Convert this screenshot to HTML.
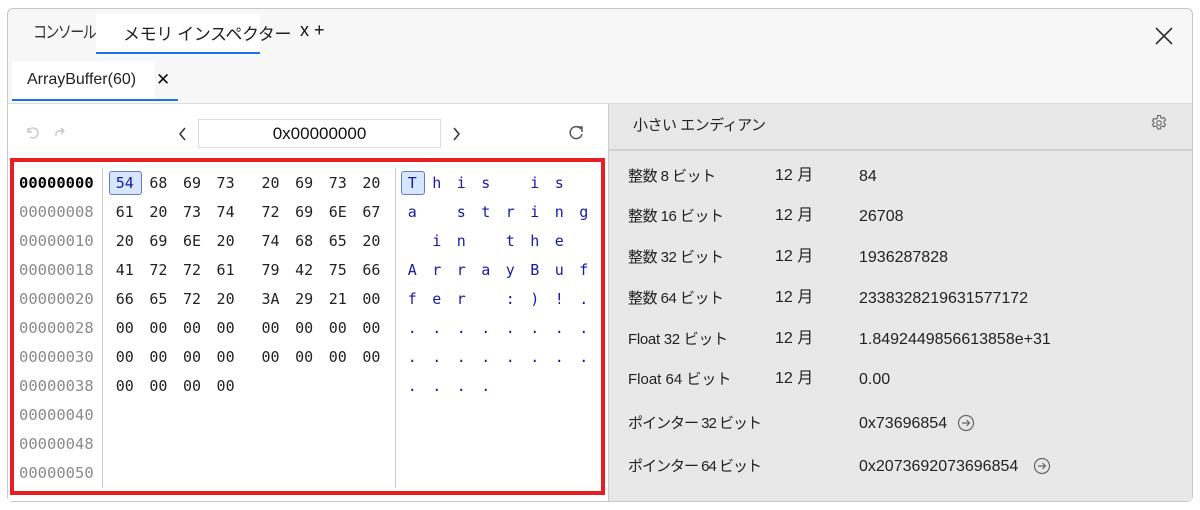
<!DOCTYPE html>
<html><head><meta charset="utf-8"><style>
*{margin:0;padding:0;box-sizing:border-box}
body{width:1200px;height:510px;background:#fff;position:relative;overflow:hidden;font-family:"Liberation Sans","Noto Sans CJK JP",sans-serif;color:#222}
.a{position:absolute}
.win{left:7px;top:8px;width:1186px;height:494px;border:1px solid #c8c8c8;border-radius:6px;background:#f7f7f7;overflow:hidden}
.mono{font-family:"DejaVu Sans Mono","Liberation Mono",monospace}
.row{position:absolute;height:29px;line-height:29px;white-space:nowrap}
.hx{display:flex}
.hx span{display:inline-block;width:33.6px;text-align:center;font-size:15px}
.hx span:nth-child(5){margin-left:11.4px}
.as{display:flex}
.as span{display:inline-block;width:24.5px;text-align:center;font-size:15px;color:#1a1aa6}
.addr{font-size:15.5px;color:#8a8a8a}
.r{font-size:15px;color:#222;height:20px;line-height:20px;white-space:nowrap}
.v{font-size:16px}
</style></head><body>
<div class="a win"></div>
<!-- top tabs -->
<div class="a" style="left:33px;top:20px;font-size:14px;color:#333;letter-spacing:-1.6px;transform:scaleY(1.2);transform-origin:left top">コンソール</div>
<div class="a" style="left:96px;top:14px;width:164px;height:41px;background:#fff"></div>
<div class="a" style="left:96px;top:52px;width:164px;height:2px;background:#1a73e8"></div>
<div class="a" style="left:123px;top:20px;font-size:17px;color:#222;letter-spacing:-0.4px">メモリ インスペクター</div>
<div class="a" style="left:300px;top:20px;font-size:18px;color:#111">x +</div>
<svg class="a" style="left:1154px;top:26px" width="20" height="20"><path d="M2 2L18 18M18 2L2 18" stroke="#333" stroke-width="1.6"/></svg>
<!-- second tab row -->
<div class="a" style="left:12px;top:61px;width:143px;height:40px;background:#fff"></div>
<div class="a" style="left:12px;top:99px;width:166px;height:2px;background:#1a73e8"></div>
<div class="a" style="left:27px;top:71px;font-size:16px;color:#222">ArrayBuffer(60)</div>
<div class="a" style="left:156px;top:70px;font-size:17px;color:#111">✕</div>
<div class="a" style="left:8px;top:103px;width:1184px;height:1px;background:#ddd"></div>
<!-- left panel -->
<div class="a" style="left:8px;top:104px;width:600px;height:397px;background:#fff"></div>
<svg class="a" style="left:24px;top:124px" width="50" height="16"><path d="M4 4v4h4M4 8a5 5 0 1 1 2 5" fill="none" stroke="#c8c8c8" stroke-width="1.4"/><path d="M40 7h-5a3 3 0 0 0 -3 3v2M37 4l3 3-3 3" fill="none" stroke="#c8c8c8" stroke-width="1.4"/></svg>
<svg class="a" style="left:177px;top:126px" width="12" height="16"><path d="M8 2L3 8l5 6" fill="none" stroke="#333" stroke-width="1.5"/></svg>
<div class="a" style="left:198px;top:119px;width:243px;height:29px;border:1px solid #ddd;background:#fff;text-align:center;line-height:27px;font-size:17px;color:#111">0x00000000</div>
<svg class="a" style="left:451px;top:126px" width="12" height="16"><path d="M3 2l5 6-5 6" fill="none" stroke="#333" stroke-width="1.5"/></svg>
<svg class="a" style="left:567px;top:124px" width="18" height="18"><path d="M14 5A6 6 0 1 0 15 10" fill="none" stroke="#555" stroke-width="1.5"/><path d="M10 3h5v5" fill="none" stroke="#555" stroke-width="1.5"/></svg>
<!-- red rect -->
<div class="a" style="left:10px;top:158px;width:595px;height:337px;border:4px solid #e81e25"></div>
<div class="a" style="left:102px;top:168px;width:1px;height:320px;background:#ccc"></div>
<div class="a" style="left:395px;top:168px;width:1px;height:320px;background:#ccc"></div>
<div class="a" style="left:109px;top:171px;width:33px;height:24px;border:1px solid #6a78d0;border-radius:3px;background:#d6e6ff"></div>
<div class="a" style="left:401px;top:171px;width:24px;height:24px;border:1px solid #6a78d0;border-radius:3px;background:#d6e6ff"></div>
<div class="a mono" style="left:19px;top:169px">
<div class="addr" style="height:29px;line-height:29px;color:#000;font-weight:bold">00000000</div>
<div class="addr" style="height:29px;line-height:29px">00000008</div>
<div class="addr" style="height:29px;line-height:29px">00000010</div>
<div class="addr" style="height:29px;line-height:29px">00000018</div>
<div class="addr" style="height:29px;line-height:29px">00000020</div>
<div class="addr" style="height:29px;line-height:29px">00000028</div>
<div class="addr" style="height:29px;line-height:29px">00000030</div>
<div class="addr" style="height:29px;line-height:29px">00000038</div>
<div class="addr" style="height:29px;line-height:29px">00000040</div>
<div class="addr" style="height:29px;line-height:29px">00000048</div>
<div class="addr" style="height:29px;line-height:29px">00000050</div>
</div>
<div class="a mono" style="left:108px;top:169px">
<div class="row hx" style="top:0"><span style="color:#1a1aa6">54</span><span>68</span><span>69</span><span>73</span><span>20</span><span>69</span><span>73</span><span>20</span></div>
<div class="row hx" style="top:29px"><span>61</span><span>20</span><span>73</span><span>74</span><span>72</span><span>69</span><span>6E</span><span>67</span></div>
<div class="row hx" style="top:58px"><span>20</span><span>69</span><span>6E</span><span>20</span><span>74</span><span>68</span><span>65</span><span>20</span></div>
<div class="row hx" style="top:87px"><span>41</span><span>72</span><span>72</span><span>61</span><span>79</span><span>42</span><span>75</span><span>66</span></div>
<div class="row hx" style="top:116px"><span>66</span><span>65</span><span>72</span><span>20</span><span>3A</span><span>29</span><span>21</span><span>00</span></div>
<div class="row hx" style="top:145px"><span>00</span><span>00</span><span>00</span><span>00</span><span>00</span><span>00</span><span>00</span><span>00</span></div>
<div class="row hx" style="top:174px"><span>00</span><span>00</span><span>00</span><span>00</span><span>00</span><span>00</span><span>00</span><span>00</span></div>
<div class="row hx" style="top:203px"><span>00</span><span>00</span><span>00</span><span>00</span></div>
</div>
<div class="a mono" style="left:400px;top:169px">
<div class="row as" style="top:0"><span>T</span><span>h</span><span>i</span><span>s</span><span> </span><span>i</span><span>s</span><span> </span></div>
<div class="row as" style="top:29px"><span>a</span><span> </span><span>s</span><span>t</span><span>r</span><span>i</span><span>n</span><span>g</span></div>
<div class="row as" style="top:58px"><span> </span><span>i</span><span>n</span><span> </span><span>t</span><span>h</span><span>e</span><span> </span></div>
<div class="row as" style="top:87px"><span>A</span><span>r</span><span>r</span><span>a</span><span>y</span><span>B</span><span>u</span><span>f</span></div>
<div class="row as" style="top:116px"><span>f</span><span>e</span><span>r</span><span> </span><span>:</span><span>)</span><span>!</span><span>.</span></div>
<div class="row as" style="top:145px"><span>.</span><span>.</span><span>.</span><span>.</span><span>.</span><span>.</span><span>.</span><span>.</span></div>
<div class="row as" style="top:174px"><span>.</span><span>.</span><span>.</span><span>.</span><span>.</span><span>.</span><span>.</span><span>.</span></div>
<div class="row as" style="top:203px"><span>.</span><span>.</span><span>.</span><span>.</span></div>
</div>
<!-- right panel -->
<div class="a" style="left:608px;top:104px;width:584px;height:397px;background:#e8e8e8;border-left:1px solid #ccc"></div>
<div class="a" style="left:609px;top:149px;width:583px;height:2px;background:#d0d0d0"></div>
<div class="a" style="left:633px;top:114px;font-size:15px;color:#222;letter-spacing:-0.5px">小さい エンディアン</div>
<svg class="a" style="left:1150px;top:114px" width="18" height="18" viewBox="0 0 18 18"><path d="M7.6 1.5h2.8l.4 2.1 1.4.8 2-.8 1.4 2.4-1.6 1.4v1.6l1.6 1.4-1.4 2.4-2-.8-1.4.8-.4 2.1H7.6l-.4-2.1-1.4-.8-2 .8-1.4-2.4 1.6-1.4V8.2L2.4 6.8 3.8 4.4l2 .8 1.4-.8z" fill="none" stroke="#666" stroke-width="1.1"/><circle cx="9" cy="9" r="2.3" fill="none" stroke="#666" stroke-width="1.1"/></svg>
<div class="a r" style="left:628px;top:167px;letter-spacing:-0.5px">整数 8 ビット</div><div class="a r" style="left:775px;top:166px;font-size:16px">12 月</div><div class="a r v" style="left:859px;top:167px">84</div>
<div class="a r" style="left:628px;top:207px;letter-spacing:-0.5px">整数 16 ビット</div><div class="a r" style="left:775px;top:206px;font-size:16px">12 月</div><div class="a r v" style="left:859px;top:207px">26708</div>
<div class="a r" style="left:628px;top:248px;letter-spacing:-0.5px">整数 32 ビット</div><div class="a r" style="left:775px;top:247px;font-size:16px">12 月</div><div class="a r v" style="left:859px;top:248px">1936287828</div>
<div class="a r" style="left:628px;top:289px;letter-spacing:-0.5px">整数 64 ビット</div><div class="a r" style="left:775px;top:288px;font-size:16px">12 月</div><div class="a r v" style="left:859px;top:289px">2338328219631577172</div>
<div class="a r" style="left:628px;top:330px;letter-spacing:-0.3px">Float 32 ビット</div><div class="a r" style="left:775px;top:329px;font-size:16px">12 月</div><div class="a r v" style="left:859px;top:330px">1.8492449856613858e+31</div>
<div class="a r" style="left:628px;top:370px">Float 64 ビット</div><div class="a r" style="left:775px;top:369px;font-size:16px">12 月</div><div class="a r v" style="left:859px;top:370px">0.00</div>
<div class="a r" style="left:628px;top:414px;letter-spacing:-1px">ポインター 32 ビット</div><div class="a r v" style="left:859px;top:414px">0x73696854</div>
<svg class="a" style="left:957px;top:414px" width="18" height="18"><circle cx="9" cy="9" r="7.5" fill="none" stroke="#666" stroke-width="1.2"/><path d="M5 9h7M9.5 6l3 3-3 3" fill="none" stroke="#666" stroke-width="1.2"/></svg>
<div class="a r" style="left:628px;top:457px;letter-spacing:-1px">ポインター 64 ビット</div><div class="a r v" style="left:859px;top:457px">0x2073692073696854</div>
<svg class="a" style="left:1033px;top:457px" width="18" height="18"><circle cx="9" cy="9" r="7.5" fill="none" stroke="#666" stroke-width="1.2"/><path d="M5 9h7M9.5 6l3 3-3 3" fill="none" stroke="#666" stroke-width="1.2"/></svg>
</body></html>
